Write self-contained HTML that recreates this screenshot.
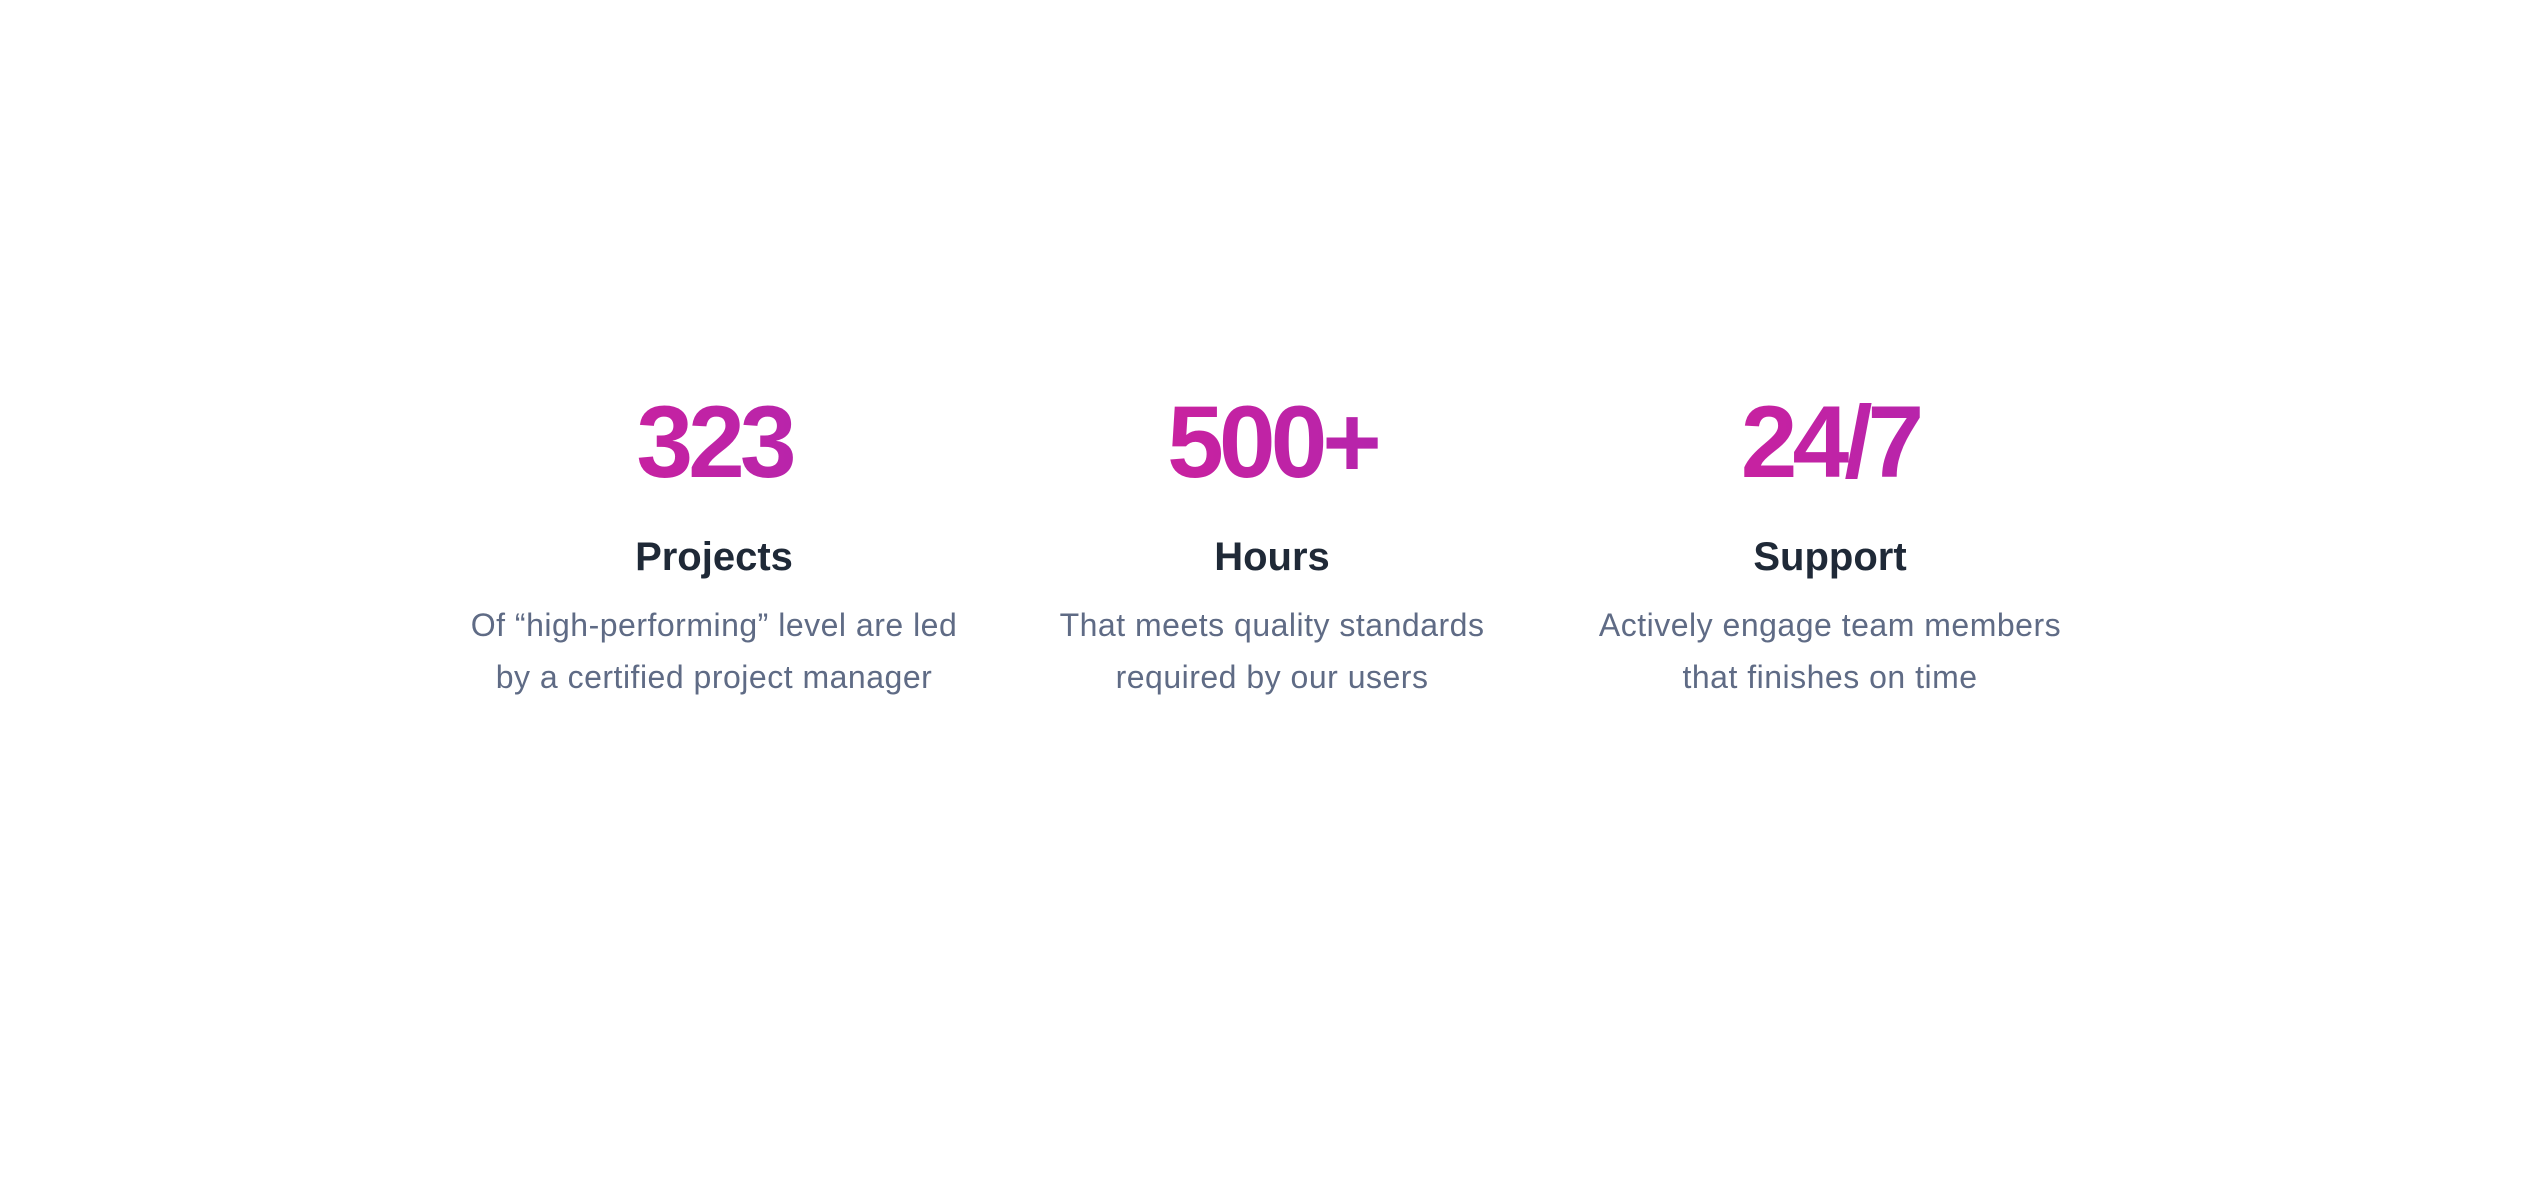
<!DOCTYPE html>
<html><head><meta charset="utf-8"><style>
html,body{margin:0;padding:0;background:#fff;width:2538px;height:1198px;overflow:hidden;font-family:"Liberation Sans",sans-serif}
.col{position:absolute;top:0;width:558px;margin-left:-279px;text-align:center}
.num{position:absolute;left:0;right:0;top:377px;font-size:102px;font-weight:700;letter-spacing:-5px;line-height:130px;
background:linear-gradient(90deg,#d81f95,#a727b6);-webkit-background-clip:text;background-clip:text;color:transparent}
.t{position:absolute;left:0;right:0;top:529px;font-size:40px;font-weight:700;color:#1f2937;line-height:56px}
.d{position:absolute;left:-40px;right:-40px;top:599px;font-size:32px;letter-spacing:0.5px;color:#5f6b85;line-height:52px}
</style></head><body>
<div class="col" style="left:714px"><div class="num">323</div><div class="t">Projects</div><div class="d">Of “high-performing” level are led<br>by a certified project manager</div></div>
<div class="col" style="left:1272px"><div class="num">500+</div><div class="t">Hours</div><div class="d">That meets quality standards<br>required by our users</div></div>
<div class="col" style="left:1830px"><div class="num">24/7</div><div class="t">Support</div><div class="d">Actively engage team members<br>that finishes on time</div></div>
</body></html>
